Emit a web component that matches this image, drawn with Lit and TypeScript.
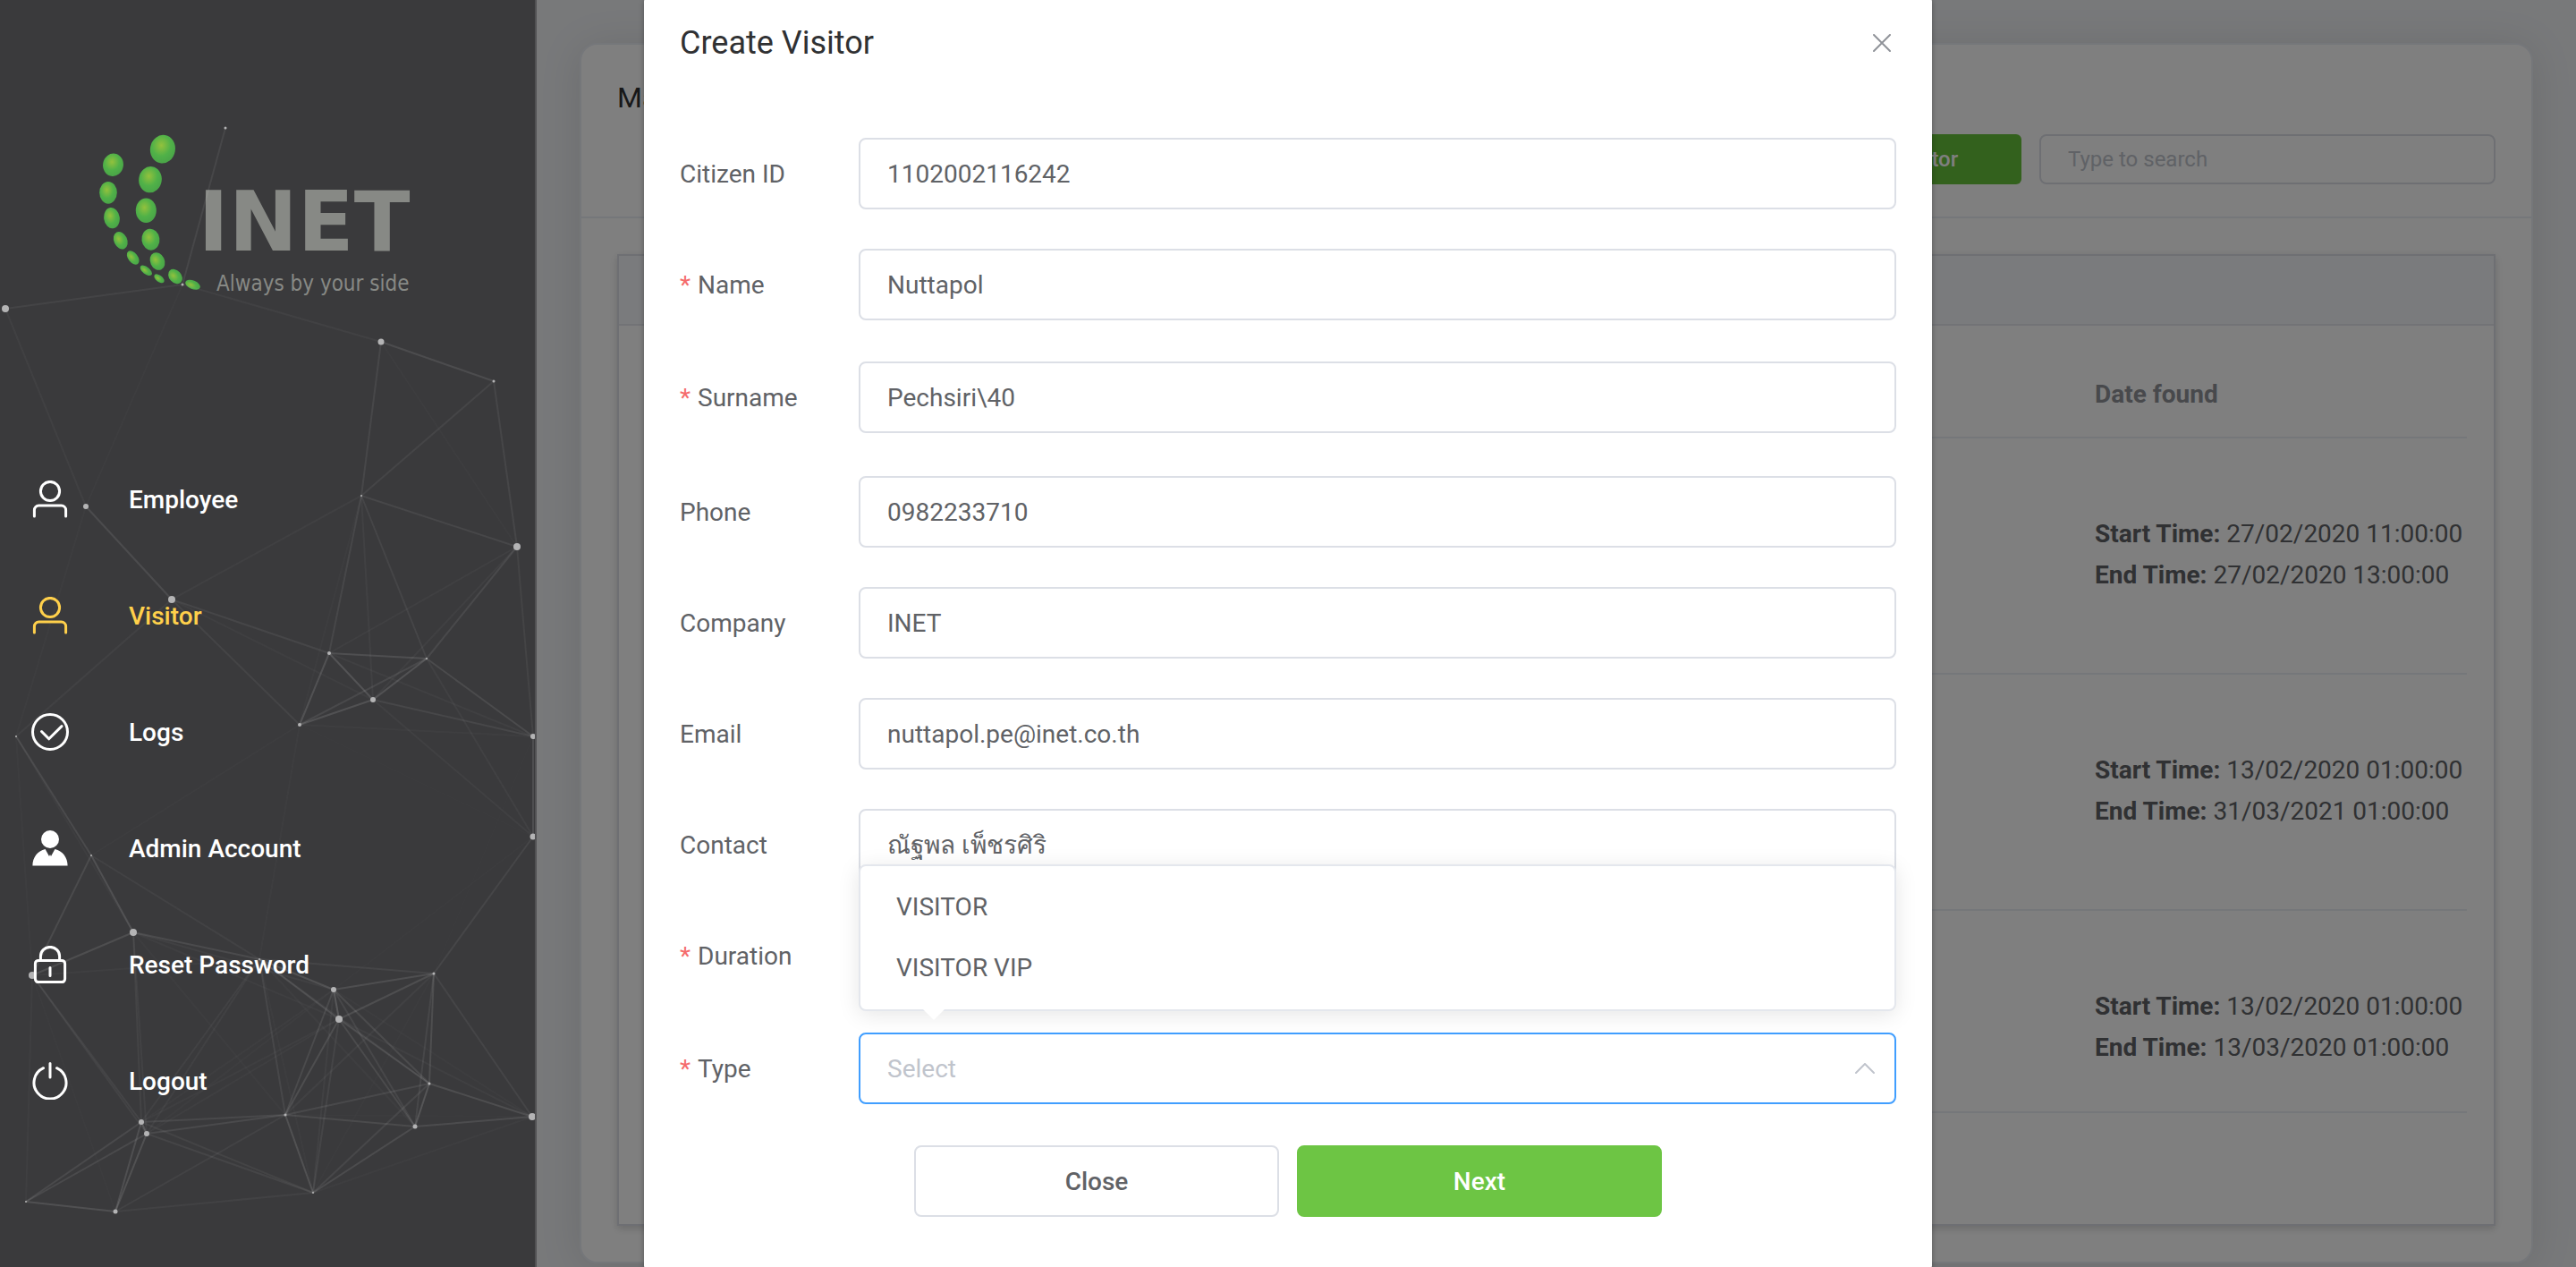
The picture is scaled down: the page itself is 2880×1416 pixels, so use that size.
import { LitElement, html, svg, css } from "lit";
import { customElement } from "lit/decorators.js";
import { classMap } from "lit/directives/class-map.js";

type Field = { id: string; label: string; value: string; required?: boolean };

const identityFields: Field[] = [
  { id: "citizen", label: "Citizen ID", value: "1102002116242" },
  { id: "name", label: "Name", value: "Nuttapol", required: true },
  { id: "surname", label: "Surname", value: "Pechsiri\\40", required: true },
];

const contactFields: Field[] = [
  { id: "phone", label: "Phone", value: "0982233710" },
  { id: "company", label: "Company", value: "INET" },
  { id: "email", label: "Email", value: "nuttapol.pe@inet.co.th" },
  { id: "contact", label: "Contact", value: "ณัฐพล เพ็ชรศิริ" },
  { id: "duration", label: "Duration", value: "", required: true },
];

const visits = [
  { start: "27/02/2020 11:00:00", end: "27/02/2020 13:00:00" },
  { start: "13/02/2020 01:00:00", end: "31/03/2021 01:00:00" },
  { start: "13/02/2020 01:00:00", end: "13/03/2020 01:00:00" },
];

const icons = {
  user: svg`<circle cx="21" cy="12" r="10.6"/><path d="M3.4 40v-7a5 5 0 0 1 5-5h25.2a5 5 0 0 1 5 5v7"/>`,
  check: svg`<circle cx="21" cy="21" r="19.5"/><path d="M11.5 20.5l8.2 8.3 14.3-14.2"/>`,
  admin: svg`<g fill="currentColor" stroke="none"><circle cx="21" cy="11" r="10"/><path d="M1.400 40.600C1.400 31.500 7 23.800 15.600 22l4.400 8 1-2 1 2 4.400-8C35 23.800 40.600 31.500 40.600 40.600z"/></g>`,
  lock: svg`<rect x="4.4" y="16.4" width="33.2" height="24.2" rx="3.5"/><path d="M10.4 16v-4.400a10.600 10.200 0 0 1 21.200 0V16M21 24.500v9"/>`,
  power: svg`<path d="M13.5 6.7a18 18 0 1 0 15 0M21 1.5v15.5"/>`,
};

const menu = [
  { label: "Employee", icon: icons.user },
  { label: "Visitor", icon: icons.user, active: true },
  { label: "Logs", icon: icons.check },
  { label: "Admin Account", icon: icons.admin },
  { label: "Reset Password", icon: icons.lock },
  { label: "Logout", icon: icons.power },
];

// Particle field: x, y, radius. Particles closer than the link distance are joined.
const particles = [
  [252, 143, 1.5], [204, 318, 1.5], [6, 345, 4], [426, 382, 3.5], [552, 426, 1.5],
  [96, 566, 3], [404, 554, 1], [578, 611, 4], [192, 670, 4], [368, 730, 2],
  [477, 736, 1], [417, 782, 3], [335, 810, 2], [18, 823, 1], [596, 823, 3],
  [596, 935, 3.5], [102, 956, 1], [149, 1042, 4], [36, 1090, 4], [290, 1072, 1],
  [373, 1106, 3], [379, 1139, 4], [485, 1088, 1.5], [480, 1211, 1.5], [595, 1248, 4],
  [464, 1259, 2.5], [319, 1246, 1.5], [158, 1254, 3], [164, 1267, 3], [29, 1343, 1],
  [129, 1354, 2.5], [350, 1333, 1],
];
const linkDistance = 300;

const links = particles.flatMap(([x1, y1], i) =>
  particles.slice(i + 1).flatMap(([x2, y2]) => {
    const d = Math.hypot(x2 - x1, y2 - y1);
    return d < linkDistance ? [{ x1, y1, x2, y2, o: 0.17 * (1 - d / linkDistance) }] : [];
  })
);

// Logo beads: cx, cy, rx, ry, rotation.
const beads = [
  [126.5, 184.3, 11.4, 12.7, 10], [121, 215.3, 9.8, 12.4, 0], [125, 243.7, 8.8, 11.7, -8],
  [134.8, 268.7, 7.4, 10.2, -25], [148.7, 288, 5.4, 8.8, -38], [163.3, 302.3, 4, 7.8, -52],
  [178, 311.3, 3.6, 6.6, -52], [181.9, 166.7, 14, 15.9, 10], [168, 200.7, 12.8, 14.6, 8],
  [163.3, 235.3, 11.5, 13.8, 0], [168.4, 267.7, 10, 12, -8], [176, 292, 8, 10.2, -25],
  [196, 309, 6.8, 9.2, -42], [215.5, 318.3, 4.8, 8.8, -68],
];

@customElement("visitor-sidebar")
class VisitorSidebar extends LitElement {
  static styles = css`
    :host {
      display: block;
      position: relative;
      z-index: 20;
      flex: 0 0 600px;
      box-sizing: border-box;
      background: #3a3a3c;
      border-right: 2px solid #525254;
      overflow: hidden;
    }
    .logo {
      display: block;
      width: 380px;
      height: 190px;
      margin: 145px 0 158px 110px;
    }
    .net {
      position: absolute;
      left: 0;
      top: 0;
      width: 600px;
      height: 1416px;
    }
    nav {
      position: relative;
    }
    .item {
      display: flex;
      align-items: center;
      gap: 67px;
      height: 130px;
      padding-left: 35px;
      color: #fff;
      font-size: 28px;
      font-weight: 500;
      text-decoration: none;
    }
    .active {
      color: #ffd04b;
    }
    .icon {
      width: 42px;
      height: 42px;
      fill: none;
      stroke: currentColor;
      stroke-width: 3px;
      stroke-linecap: round;
      stroke-linejoin: round;
    }
    .brand {
      font: bold 92px "DejaVu Sans", sans-serif;
      fill: #878985;
    }
    .tagline {
      font: 24px "DejaVu Sans Condensed", "DejaVu Sans", sans-serif;
      font-stretch: normal;
      fill: #878985;
    }
  `;

  render() {
    return html`
      <svg class="logo" viewBox="110 145 380 190" role="img" aria-label="INET">
        <defs>
          <radialGradient id="bead" cx="0.42" cy="0.38" r="0.62">
            <stop offset="0" stop-color="#93c13d" />
            <stop offset="0.6" stop-color="#50b148" />
            <stop offset="1" stop-color="#4aa548" />
          </radialGradient>
        </defs>
        ${beads.map(
          ([x, y, rx, ry, r]) =>
            svg`<ellipse cx=${x} cy=${y} rx=${rx} ry=${ry} fill="url(#bead)" transform="rotate(${r} ${x} ${y})"/>`
        )}
        <text class="brand" x="340" y="280" text-anchor="middle">INET</text>
        <text class="tagline" x="242" y="325">Always by your side</text>
      </svg>
      <svg class="net" viewBox="0 0 600 1416" aria-hidden="true">
        ${links.map(
          (l) =>
            svg`<line x1=${l.x1} y1=${l.y1} x2=${l.x2} y2=${l.y2} stroke="#fff" stroke-width="2" stroke-opacity=${l.o}/>`
        )}
        ${particles.map(([x, y, r]) => svg`<circle cx=${x} cy=${y} r=${r} fill="#b4b4b5"/>`)}
      </svg>
      <nav>
        ${menu.map(
          (m) => html`<a class=${classMap({ item: true, active: !!m.active })} href="#">
            <svg class="icon" viewBox="0 0 42 42" aria-hidden="true">${m.icon}</svg>
            <span>${m.label}</span>
          </a>`
        )}
      </nav>
    `;
  }
}

@customElement("visitor-list")
class VisitorList extends LitElement {
  static styles = css`
    :host {
      display: block;
      flex: 1;
      min-width: 0;
      padding: 48px;
      background: #f0f2f5;
      color: #606266;
      font-size: 28px;
      line-height: 46px;
    }
    .card {
      background: #fff;
      border: 2px solid #ebeef5;
      border-radius: 20px;
      box-shadow: 0 4px 48px rgba(0, 0, 0, 0.1);
    }
    .head {
      padding: 36px 40px;
      border-bottom: 2px solid #ebeef5;
    }
    h1 {
      margin: 0 0 18px;
      font-size: 32px;
      font-weight: 400;
      color: #303133;
      line-height: 46px;
    }
    .tools {
      display: flex;
      justify-content: flex-end;
      gap: 20px;
    }
    .create {
      width: 288px;
      height: 56px;
      border: 0;
      border-radius: 6px;
      background: #67c23a;
      color: #fff;
      font: 500 24px Roboto, sans-serif;
    }
    .search {
      box-sizing: border-box;
      width: 510px;
      height: 56px;
      padding: 0 30px;
      border: 2px solid #dcdfe6;
      border-radius: 8px;
      background: #fff;
      font: 24px Roboto, sans-serif;
    }
    .search::placeholder {
      color: #c0c4cc;
    }
    .panel {
      margin: 40px;
      border: 2px solid #dcdfe6;
      box-shadow: 0 4px 8px rgba(0, 0, 0, 0.12), 0 0 12px rgba(0, 0, 0, 0.04);
    }
    .tabs {
      height: 76px;
      background: #f5f7fa;
      border-bottom: 2px solid #e4e7ed;
    }
    .content {
      padding: 30px 30px 124px;
    }
    .scroll {
      height: 848px;
      overflow: hidden;
      border-bottom: 2px solid #ebeef5;
    }
    table {
      width: 100%;
      border-collapse: separate;
      border-spacing: 0;
    }
    th,
    td {
      border-bottom: 2px solid #ebeef5;
      text-align: left;
    }
    th {
      padding: 24px 0;
      color: #909399;
    }
    td {
      height: 260px;
      padding: 0 0 2px;
      white-space: nowrap;
    }
    th.date,
    td.date {
      width: 416px;
      padding-left: 20px;
    }
  `;

  render() {
    return html`
      <section class="card">
        <header class="head">
          <h1>Manage Visitor</h1>
          <div class="tools">
            <button class="create">Create Visitor</button>
            <input class="search" type="search" aria-label="Search visitors" placeholder="Type to search" />
          </div>
        </header>
        <div class="panel">
          <div class="tabs"></div>
          <div class="content">
            <div class="scroll">
              <table>
                <thead>
                  <tr><th></th><th class="date">Date found</th></tr>
                </thead>
                <tbody>
                  ${visits.map(
                    (v) => html`<tr>
                      <td></td>
                      <td class="date">
                        <b>Start Time:</b> ${v.start}<br />
                        <b>End Time:</b> ${v.end}
                      </td>
                    </tr>`
                  )}
                </tbody>
              </table>
            </div>
          </div>
        </div>
      </section>
    `;
  }
}

@customElement("visitor-dialog")
class VisitorDialog extends LitElement {
  static styles = css`
    :host {
      position: absolute;
      inset: 0;
      z-index: 30;
      display: flex;
      align-items: center;
      justify-content: center;
      pointer-events: none;
    }
    .dialog {
      flex: none;
      width: 50%;
      box-sizing: border-box;
      padding: 26px 40px 58px;
      border-radius: 4px;
      background: #fff;
      box-shadow: 0 2px 6px rgba(0, 0, 0, 0.3);
      color: #606266;
      font-size: 28px;
      pointer-events: auto;
    }
    header {
      display: flex;
      align-items: center;
      justify-content: space-between;
      margin-bottom: 82px;
    }
    h2 {
      margin: 0;
      color: #303133;
      font-size: 36px;
      font-weight: 400;
      line-height: 48px;
    }
    .x {
      display: flex;
      padding: 6px;
      border: 0;
      background: none;
    }
    .x svg {
      width: 20px;
      height: 20px;
      stroke: #909399;
      stroke-width: 2px;
      stroke-linecap: round;
    }
    form {
      display: flex;
      flex-direction: column;
      gap: 2px;
    }
    .row {
      display: flex;
      align-items: center;
      height: 80px;
      margin-bottom: 44px;
    }
    .required {
      margin-bottom: 46px;
    }
    .label {
      flex: 0 0 200px;
    }
    .required .label::before {
      content: "*";
      margin-right: 8px;
      color: #f56c6c;
    }
    .box {
      position: relative;
      flex: 1;
      display: flex;
    }
    .control {
      box-sizing: border-box;
      width: 100%;
      height: 80px;
      padding: 0 30px;
      border: 2px solid #dcdfe6;
      border-radius: 8px;
      background: #fff;
      color: #606266;
      font: 28px Roboto, sans-serif;
      outline: 0;
    }
    .select {
      appearance: none;
      border-color: #409eff;
      color: #c0c4cc;
    }
    .chevron {
      position: absolute;
      right: 24px;
      top: 34px;
      width: 22px;
      height: 12px;
      fill: none;
      stroke: #c0c4cc;
      stroke-width: 2px;
      stroke-linecap: round;
      stroke-linejoin: round;
      pointer-events: none;
    }
    .popup {
      position: absolute;
      left: 0;
      right: 0;
      bottom: calc(100% + 24px);
      border: 2px solid #e4e7ed;
      border-radius: 8px;
      background: #fff;
      box-shadow: 0 4px 24px rgba(0, 0, 0, 0.1);
    }
    .options {
      margin: 0;
      padding: 12px 0;
      list-style: none;
    }
    .options li {
      padding: 0 40px;
      line-height: 68px;
    }
    .arrow {
      position: absolute;
      left: 70px;
      top: 100%;
      width: 24px;
      height: 14px;
    }
    .actions {
      display: flex;
      justify-content: center;
      gap: 20px;
    }
    .btn {
      box-sizing: border-box;
      width: 408px;
      height: 80px;
      border: 2px solid #dcdfe6;
      border-radius: 8px;
      background: #fff;
      color: #606266;
      font: 500 28px Roboto, sans-serif;
    }
    .next {
      border-color: #6dc544;
      background: #6dc544;
      color: #fff;
    }
  `;

  private field(f: Field) {
    return html`<div class=${classMap({ row: true, required: !!f.required })}>
      <label class="label" for=${f.id}>${f.label}</label>
      <div class="box"><input class="control" id=${f.id} type="text" .value=${f.value} /></div>
    </div>`;
  }

  render() {
    return html`
      <section class="dialog" role="dialog" aria-labelledby="title">
        <header>
          <h2 id="title">Create Visitor</h2>
          <button class="x" aria-label="Close dialog">
            <svg viewBox="0 0 20 20"><path d="M1 1l18 18M19 1L1 19" /></svg>
          </button>
        </header>
        <form id="visitor" @submit=${(e: Event) => e.preventDefault()}>
          <div>${identityFields.map((f) => this.field(f))}</div>
          <div>
            ${contactFields.map((f) => this.field(f))}
            <div class="row required">
              <label class="label" for="type">Type</label>
              <div class="box">
                <select class="control select" id="type">
                  <option>Select</option>
                  <option>VISITOR</option>
                  <option>VISITOR VIP</option>
                </select>
                <svg class="chevron" viewBox="0 0 22 12"><path d="M1 11L11 1l10 10" /></svg>
                <div class="popup">
                  <ul class="options" role="listbox" aria-label="Type">
                    <li role="option">VISITOR</li>
                    <li role="option">VISITOR VIP</li>
                  </ul>
                  <svg class="arrow" viewBox="0 0 24 14"><path d="M0 0h24L12 12z" fill="#fff" /></svg>
                </div>
              </div>
            </div>
          </div>
        </form>
        <div class="actions">
          <button class="btn" type="button">Close</button>
          <button class="btn next" type="submit" form="visitor">Next</button>
        </div>
      </section>
    `;
  }
}

@customElement("app-root")
class AppRoot extends LitElement {
  static styles = css`
    :host {
      display: flex;
      position: relative;
      height: 100vh;
      overflow: hidden;
      font-family: Roboto, "Noto Sans", sans-serif;
    }
    .mask {
      position: absolute;
      inset: 0;
      z-index: 10;
      background: rgba(0, 0, 0, 0.5);
    }
  `;

  render() {
    return html`
      <visitor-sidebar></visitor-sidebar>
      <visitor-list></visitor-list>
      <div class="mask"></div>
      <visitor-dialog></visitor-dialog>
    `;
  }
}
